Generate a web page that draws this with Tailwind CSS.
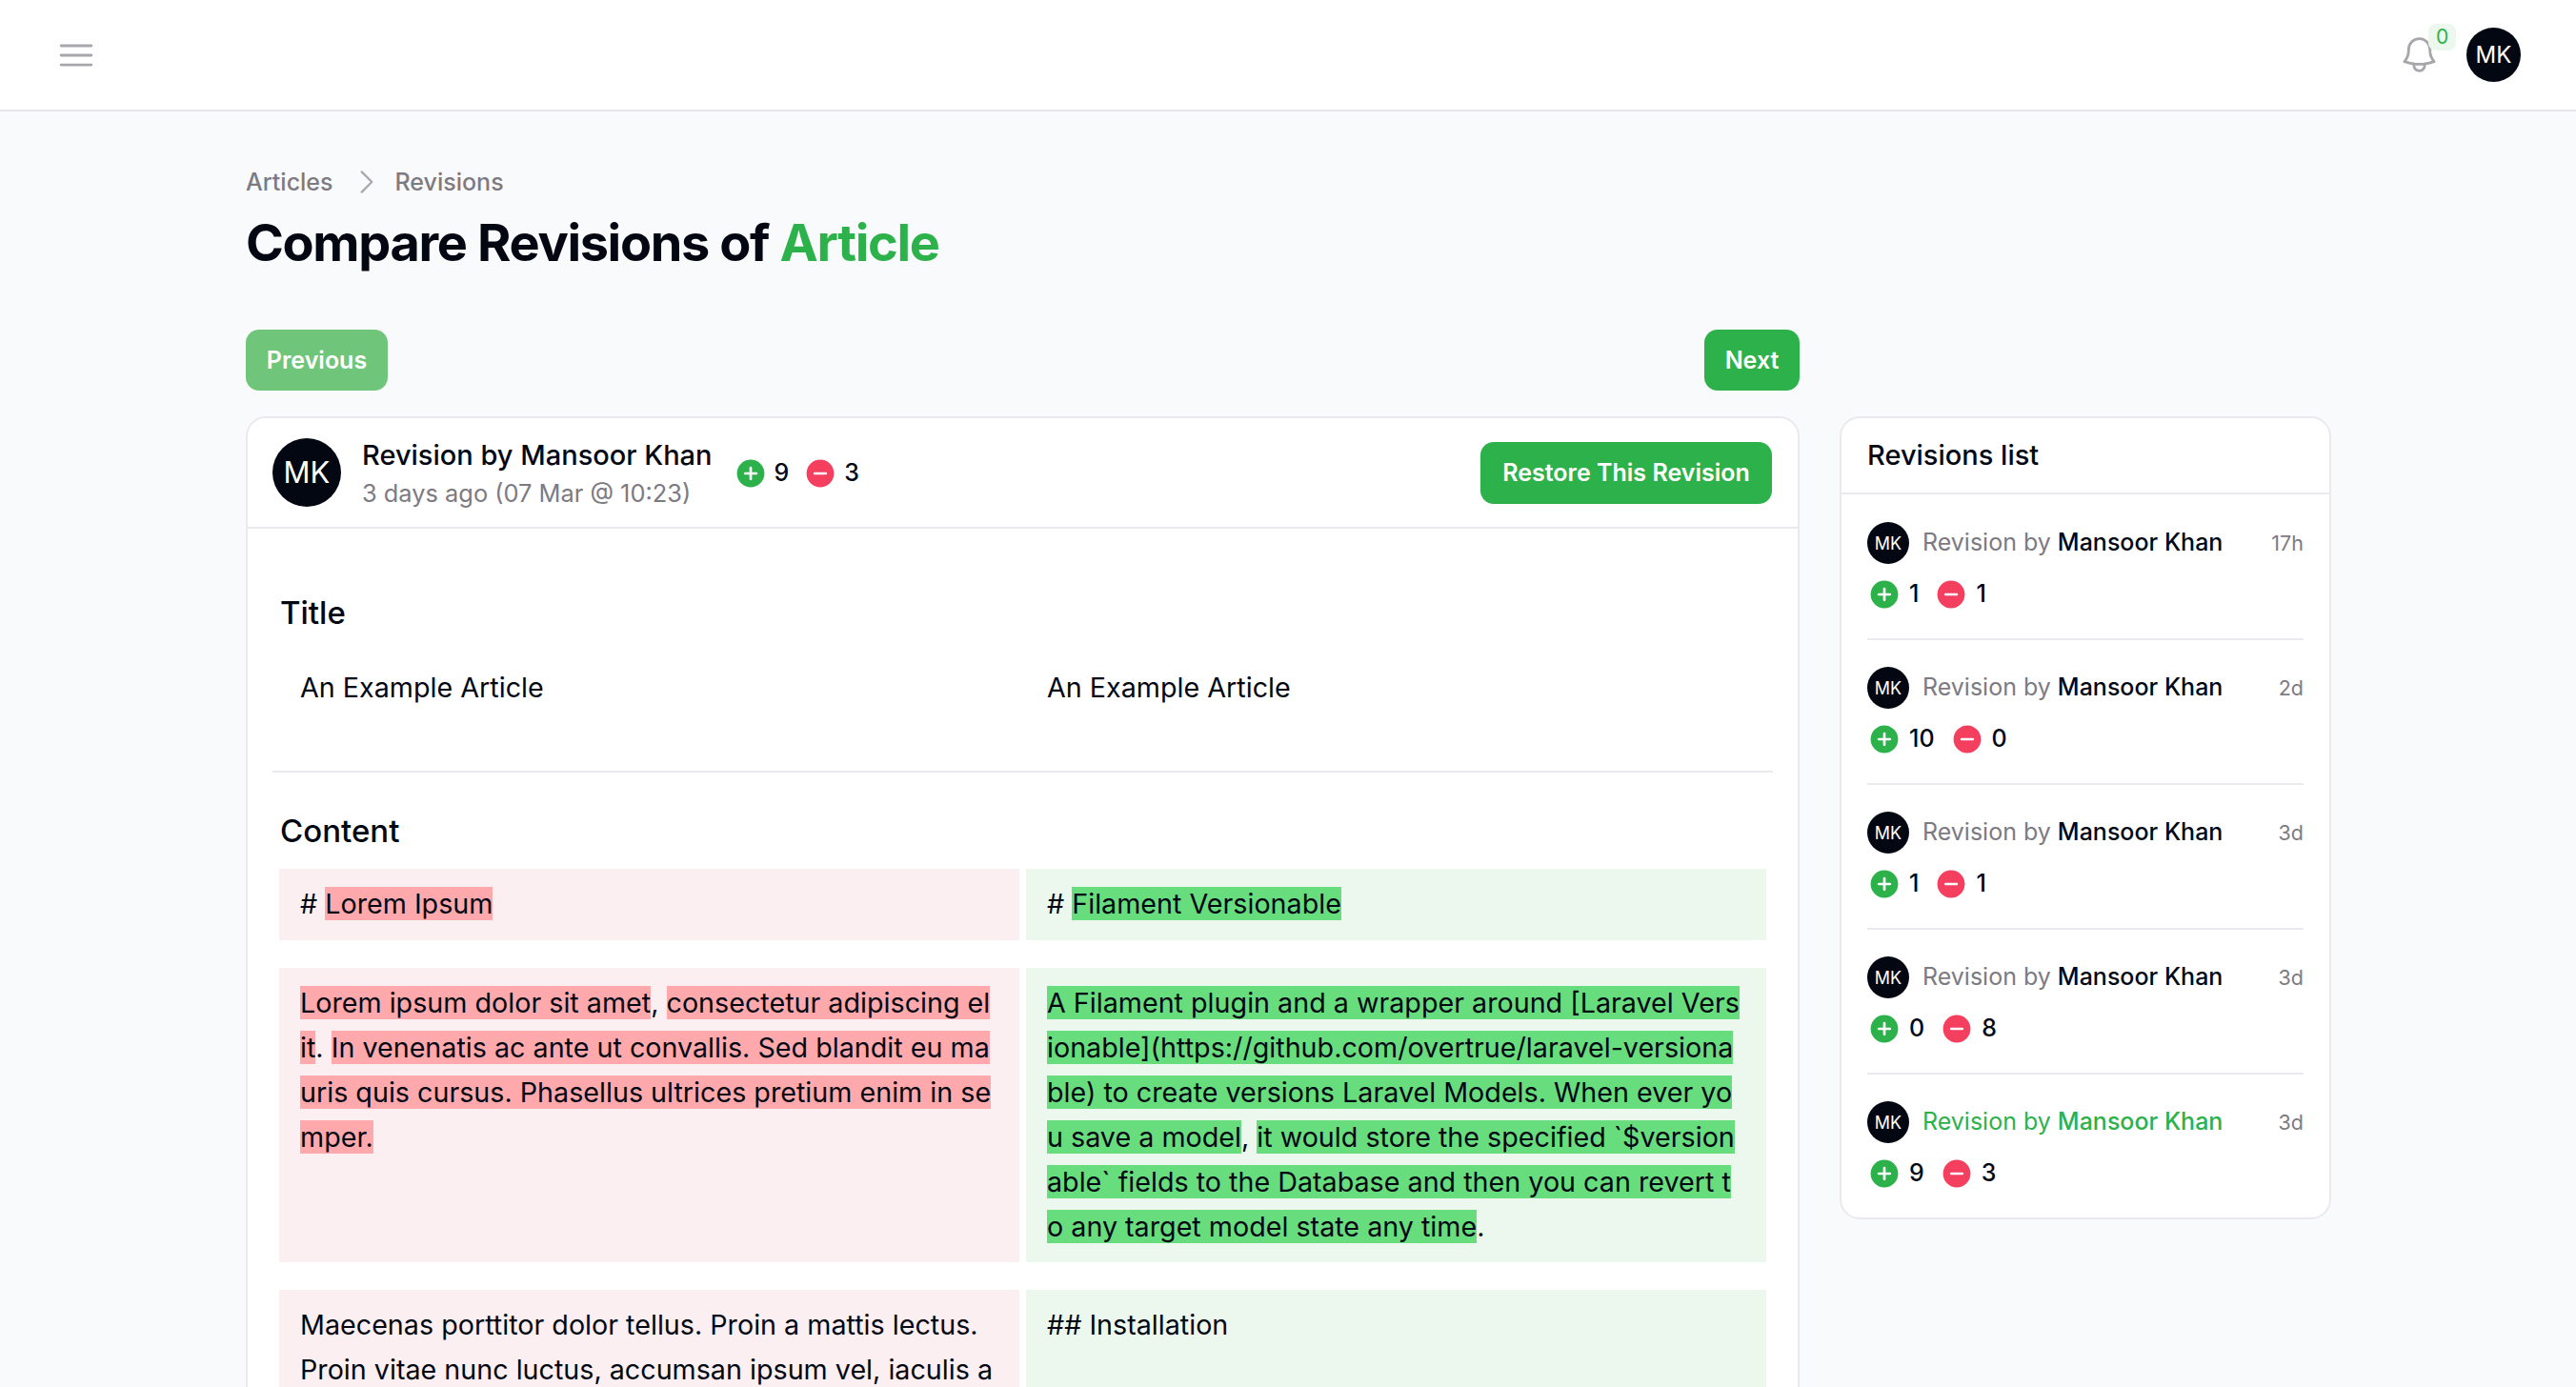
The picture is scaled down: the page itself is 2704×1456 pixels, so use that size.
<!DOCTYPE html>
<html lang="en">
<head>
  <meta charset="UTF-8">
  <title>Compare Revisions of Article</title>
  <script src="https://cdn.jsdelivr.net/npm/@tailwindcss/browser@4"></script>
</head>
<body class="bg-[#f9fafb] font-[Inter,sans-serif] text-[#030712] h-[1456px] overflow-hidden">
  <header class="h-[117px] bg-white border-b-2 border-[#e5e7eb] flex items-center justify-between pl-[57px] pr-[58px]">
    <svg class="w-[46px] h-[46px] text-[#a8a5ab]" fill="none" viewBox="0 0 24 24" stroke="currentColor" stroke-width="1.5"><path stroke-linecap="round" stroke-linejoin="round" d="M3.75 6.75h16.5M3.75 12h16.5m-16.5 5.25h16.5"/></svg>
    <div class="flex items-center">
      <div class="relative w-[45px] h-[45px] mr-[27px]">
        <svg class="w-[45px] h-[45px] text-[#a8a5ab]" fill="none" viewBox="0 0 24 24" stroke="currentColor" stroke-width="1.5"><path stroke-linecap="round" stroke-linejoin="round" d="M14.857 17.082a23.848 23.848 0 0 0 5.454-1.31A8.967 8.967 0 0 1 18 9.75V9A6 6 0 0 0 6 9v.75a8.967 8.967 0 0 1-2.312 6.022c1.733.64 3.56 1.085 5.455 1.31m5.714 0a24.255 24.255 0 0 1-5.714 0m5.714 0a3 3 0 1 1-5.714 0"/></svg>
        <span class="absolute left-[32px] top-[-10px] w-[29px] h-[28px] rounded-[8px] bg-[#ecf8ee] text-[#2db24b] text-[21px] leading-[28px] text-center">0</span>
      </div>
      <div class="w-[57px] h-[57px] rounded-full bg-[#030712] text-white text-[24px] flex items-center justify-center">MK</div>
    </div>
  </header>

  <main class="px-[258px] pt-[57px]">
    <nav class="flex items-center h-[34px] text-[25px] leading-[34px] font-medium text-[#7d7a82]">
      <span>Articles</span>
      <svg class="w-[34px] h-[34px] ml-[18px] mr-[13px] text-[#a8a5ab]" fill="none" viewBox="0 0 24 24" stroke="currentColor" stroke-width="1.5"><path stroke-linecap="round" stroke-linejoin="round" d="m8.25 4.5 7.5 7.5-7.5 7.5"/></svg>
      <span>Revisions</span>
    </nav>
    <h1 class="mt-[16px] text-[54px] leading-[62px] font-bold tracking-[-0.025em]">Compare Revisions of <span class="text-[#2db24b]">Article</span></h1>

    <div class="mt-[60px] flex gap-[42px] items-start">
      <div class="w-[1631px] shrink-0">
        <div class="flex justify-between">
          <button class="h-[64px] w-[149px] pt-[1px] rounded-[14px] bg-[#6fc67b] text-white text-[25px] font-semibold">Previous</button>
          <button class="h-[64px] w-[100px] pt-[1px] rounded-[14px] bg-[#2db24b] text-white text-[25px] font-semibold">Next</button>
        </div>
        <section class="mt-[27px] bg-white border-2 border-[#ebe9ee] rounded-[21px]">
          <div class="h-[116px] border-b-2 border-[#ebe9ee] flex items-center pl-[26px] pr-[27px]">
            <div class="w-[72px] h-[72px] rounded-full bg-[#030712] text-white text-[31px] flex items-center justify-center">MK</div>
            <div class="ml-[22px]">
              <div class="text-[29px] leading-[43px] font-medium">Revision by Mansoor Khan</div>
              <div class="text-[25.4px] leading-[38px] text-[#7d7a82]">3 days ago (07 Mar @ 10:23)</div>
            </div>
            <div class="ml-[22px] mt-[2px] flex items-center text-[25px] font-medium">
              <svg class="w-[36px] h-[36px] mr-[7px] text-[#2db24b]" viewBox="0 0 20 20" fill="currentColor"><path fill-rule="evenodd" d="M10 18a8 8 0 1 0 0-16 8 8 0 0 0 0 16Zm.75-11.25a.75.75 0 0 0-1.5 0v2.5h-2.5a.75.75 0 0 0 0 1.5h2.5v2.5a.75.75 0 0 0 1.5 0v-2.5h2.5a.75.75 0 0 0 0-1.5h-2.5v-2.5Z" clip-rule="evenodd"/></svg>
              <span>9</span>
              <svg class="ml-[15px] mr-[7px] w-[36px] h-[36px] text-[#f43f5e]" viewBox="0 0 20 20" fill="currentColor"><path fill-rule="evenodd" d="M10 18a8 8 0 1 0 0-16 8 8 0 0 0 0 16ZM6.75 9.25a.75.75 0 0 0 0 1.5h6.5a.75.75 0 0 0 0-1.5h-6.5Z" clip-rule="evenodd"/></svg>
              <span>3</span>
            </div>
            <button class="ml-auto h-[65px] w-[306px] pt-[1px] rounded-[14px] bg-[#2db24b] text-white text-[25px] font-semibold">Restore This Revision</button>
          </div>

          <div class="px-[26px] pt-[64px]">
            <div class="pb-[49px] border-b-2 border-[#ebe9ee]">
              <h2 class="pl-[8px] text-[33px] leading-[48px] font-medium">Title</h2>
              <div class="mt-[18px] px-[7px] grid grid-cols-2 gap-x-[7px] text-[28.7px] leading-[47px]">
                <div class="pl-[22px] pr-[26px] pt-[13px] pb-[15px]">An Example Article</div>
                <div class="px-[22px] pt-[13px] pb-[15px]">An Example Article</div>
              </div>
            </div>
            <h2 class="mt-[37px] pl-[8px] text-[33px] leading-[48px] font-medium">Content</h2>
            <div class="mt-[16px] px-[7px] grid grid-cols-2 gap-x-[7px] gap-y-[29px] text-[28.7px] leading-[47px] break-all">
              <div class="bg-[#fbeff1] pl-[22px] pr-[26px] pt-[13px] pb-[15px]"># <span class="bg-[#ffa9ad]">Lorem Ipsum</span></div>
              <div class="bg-[#ecf8ee] px-[22px] pt-[13px] pb-[15px]"># <span class="bg-[#68dd7d]">Filament Versionable</span></div>

              <div class="bg-[#fbeff1] pl-[22px] pr-[26px] pt-[13px] pb-[15px] h-[309px]"><span class="bg-[#ffa9ad]">Lorem ipsum dolor sit amet</span>, <span class="bg-[#ffa9ad]">consectetur adipiscing elit</span>. <span class="bg-[#ffa9ad]">In venenatis ac ante ut convallis. Sed blandit eu mauris quis cursus. Phasellus ultrices pretium enim in semper.</span></div>
              <div class="bg-[#ecf8ee] px-[22px] pt-[13px] pb-[15px] h-[309px]"><span class="bg-[#68dd7d]">A Filament plugin and a wrapper around [Laravel Versionable](https://github.com/overtrue/laravel-versionable) to create versions Laravel Models. When ever you save a model</span>, <span class="bg-[#68dd7d]">it would store the specified `$versionable` fields to the Database and then you can revert to any target model state any time</span>.</div>

              <div class="bg-[#fbeff1] pl-[22px] pr-[26px] pt-[13px] pb-[15px] h-[200px]">Maecenas porttitor dolor tellus. Proin a mattis lectus. Proin vitae nunc luctus, accumsan ipsum vel, iaculis a</div>
              <div class="bg-[#ecf8ee] px-[22px] pt-[13px] pb-[15px] h-[200px]">## Installation</div>
            </div>
          </div>
        </section>
      </div>

      <aside class="mt-[91px] w-[516px] shrink-0 bg-white border-2 border-[#ebe9ee] rounded-[21px]">
        <h2 class="h-[80px] pl-[27px] flex items-center border-b-2 border-[#ebe9ee] text-[29px] font-medium">Revisions list</h2>
        <div id="revisions" class="px-[27px] pt-[29px] divide-y-2 divide-[#ebe9ee]"></div>
      </aside>
    </div>
  </main>

  <script>
    const revisions = [
      { added: 1, removed: 1, time: '17h' },
      { added: 10, removed: 0, time: '2d' },
      { added: 1, removed: 1, time: '3d' },
      { added: 0, removed: 8, time: '3d' },
      { added: 9, removed: 3, time: '3d', current: true },
    ];

    document.getElementById('revisions').innerHTML = revisions.map(rev => `
      <div class="pt-[28px] first:pt-0 h-[152px] first:h-[124px] last:h-[150px]">
        <div class="flex items-center">
          <div class="w-[44px] h-[44px] rounded-full bg-[#030712] text-white text-[18px] flex items-center justify-center">MK</div>
          <div class="ml-[14px] text-[25px] ${rev.current ? 'text-[#2db24b]' : 'text-[#7d7a82]'}">Revision by <span class="font-medium ${rev.current ? 'text-[#2db24b]' : 'text-[#030712]'}">Mansoor Khan</span></div>
          <div class="ml-auto text-[21.5px] text-[#7d7a82]">${rev.time}</div>
        </div>
        <div class="mt-[14px] flex items-center text-[25px] font-medium h-[36px]">
          <svg class="w-[36px] h-[36px] mr-[8px] text-[#2db24b]" viewBox="0 0 20 20" fill="currentColor"><path fill-rule="evenodd" d="M10 18a8 8 0 1 0 0-16 8 8 0 0 0 0 16Zm.75-11.25a.75.75 0 0 0-1.5 0v2.5h-2.5a.75.75 0 0 0 0 1.5h2.5v2.5a.75.75 0 0 0 1.5 0v-2.5h2.5a.75.75 0 0 0 0-1.5h-2.5v-2.5Z" clip-rule="evenodd"/></svg>
          <span>${rev.added}</span>
          <svg class="ml-[16px] mr-[8px] w-[36px] h-[36px] text-[#f43f5e]" viewBox="0 0 20 20" fill="currentColor"><path fill-rule="evenodd" d="M10 18a8 8 0 1 0 0-16 8 8 0 0 0 0 16ZM6.75 9.25a.75.75 0 0 0 0 1.5h6.5a.75.75 0 0 0 0-1.5h-6.5Z" clip-rule="evenodd"/></svg>
          <span>${rev.removed}</span>
        </div>
      </div>`).join('');
  </script>
</body>
</html>
